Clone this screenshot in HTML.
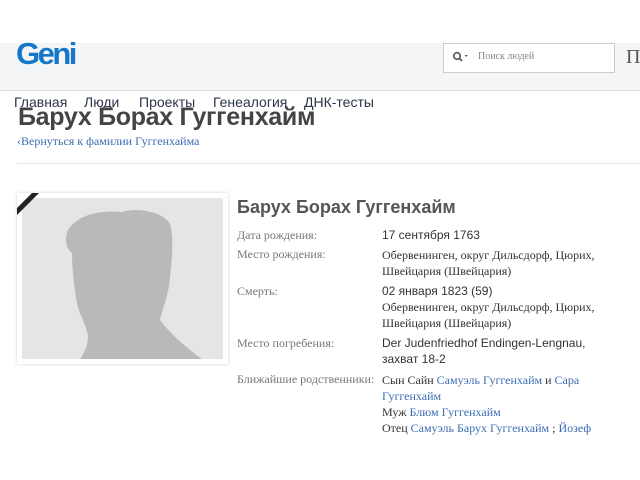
<!DOCTYPE html>
<html><head><meta charset="utf-8"><style>
body{margin:0;width:640px;height:480px;background:#fff;position:relative;overflow:hidden;font-family:"Liberation Serif",serif}
.a{position:absolute;white-space:nowrap}
.hdr{position:absolute;left:0;top:43px;width:640px;height:47px;background:#f4f5f7;border-bottom:1px solid #dcdde0}
.s{font-family:"Liberation Sans",sans-serif}
.l{color:#777;font-size:12px}
.v{color:#333;font-size:12px;line-height:16px}
a{color:#3b6db3;text-decoration:none}
.n{position:absolute;top:94px;font-family:"Liberation Sans",sans-serif;font-size:14px;color:#2d3548}
</style></head><body>
<div class="hdr"></div>
<div class="a s" style="left:16px;top:36px;font-size:31px;font-weight:bold;color:#1677c8;letter-spacing:-2.5px">Geni</div>
<div class="a" style="left:443px;top:43px;width:172px;height:30px;background:#fff;border:1px solid #ccc;box-sizing:border-box"></div>
<svg class="a" style="left:452px;top:51px" width="18" height="12"><circle cx="5" cy="5" r="3.3" fill="none" stroke="#555" stroke-width="1.6"/><path d="M7.5 7.5 L10 10" stroke="#555" stroke-width="1.8"/><path d="M12.5 4 L16 4 L14.25 6 Z" fill="#666"/></svg>
<div class="a" style="left:478px;top:51px;font-size:10px;color:#888">Поиск людей</div>
<div class="a" style="left:626px;top:46px;font-size:20px;color:#555">П</div>
<div class="n" style="left:14px">Главная</div>
<div class="n" style="left:84px">Люди</div>
<div class="n" style="left:139px">Проекты</div>
<div class="n" style="left:213px">Генеалогия</div>
<div class="n" style="left:304px">ДНК-тесты</div>
<div class="a s" style="left:18px;top:103px;font-size:25px;font-weight:bold;color:#444;letter-spacing:-0.3px">Барух Борах Гуггенхайм</div>
<div class="a" style="left:17px;top:134px;font-size:12px"><a>‹Вернуться к фамилии Гуггенхайма</a></div>
<div class="a" style="left:17px;top:163px;width:623px;height:1px;background:#e6e6e6"></div>
<div class="a" style="left:17px;top:193px;width:211px;height:171px;background:#fff;box-shadow:0 0 3px #ccc"></div>
<div class="a" style="left:22px;top:198px;width:201px;height:161px;background:#e5e5e5;overflow:hidden">
<svg width="201" height="161" viewBox="0 0 201 161"><path d="M58 161 C62 155 66 148 66 138 C64 125 56 115 54 100 C52 85 50 70 50 55 C44 50 42 42 46 32 C56 16 80 12 100 14 C112 10 140 12 148 26 C152 40 150 60 148 80 C146 100 140 112 138 122 C150 138 165 150 180 161 Z" fill="#b8b9bb"/></svg></div>
<div class="a" style="left:17px;top:193px;width:0;height:0;border-top:22px solid #222;border-right:22px solid transparent"></div>
<div class="a" style="left:17px;top:193px;width:0;height:0;border-top:15px solid #fff;border-right:15px solid transparent"></div>
<div class="a s" style="left:237px;top:197px;font-size:18px;font-weight:bold;color:#555">Барух Борах Гуггенхайм</div>
<div class="a l" style="left:237px;top:228px">Дата рождения:</div>
<div class="a v s" style="left:382px;top:227px">17 сентября 1763</div>
<div class="a l" style="left:237px;top:247px">Место рождения:</div>
<div class="a v" style="left:382px;top:247px">Обервенинген, округ Дильсдорф, Цюрих,<br>Швейцария (Швейцария)</div>
<div class="a l" style="left:237px;top:284px">Смерть:</div>
<div class="a v" style="left:382px;top:283px"><span class="s">02 января 1823 (59)</span><br>Обервенинген, округ Дильсдорф, Цюрих,<br>Швейцария (Швейцария)</div>
<div class="a l" style="left:237px;top:336px">Место погребения:</div>
<div class="a v s" style="left:382px;top:335px">Der Judenfriedhof Endingen-Lengnau,<br>захват 18-2</div>
<div class="a l" style="left:237px;top:372px">Ближайшие родственники:</div>
<div class="a v" style="left:382px;top:372px">Сын Сайн <a>Самуэль Гуггенхайм</a> и <a>Сара</a><br><a>Гуггенхайм</a><br>Муж <a>Блюм Гуггенхайм</a><br>Отец <a>Самуэль Барух Гуггенхайм</a> ; <a>Йозеф</a></div>
</body></html>
